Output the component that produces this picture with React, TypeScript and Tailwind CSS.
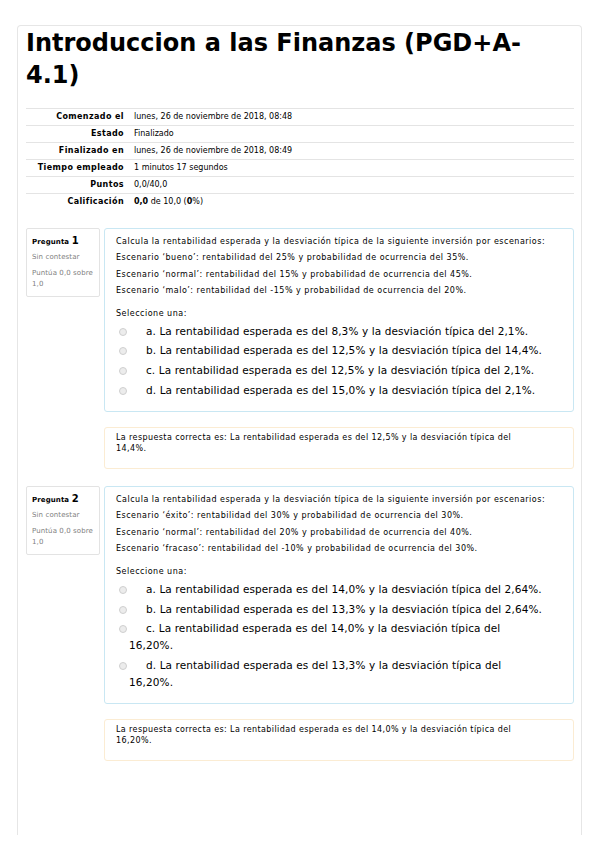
import React from "react";

type Pregunta = {
  num: number;
  enunciado: string[];
  opciones: string[];
  correcta: string;
};

const resumen: [string, React.ReactNode][] = [
  ["Comenzado el", "lunes, 26 de noviembre de 2018, 08:48"],
  ["Estado", "Finalizado"],
  ["Finalizado en", "lunes, 26 de noviembre de 2018, 08:49"],
  ["Tiempo empleado", "1 minutos 17 segundos"],
  ["Puntos", "0,0/40,0"],
  [
    "Calificación",
    <>
      <b>0,0</b> de 10,0 (<b>0</b>%)
    </>,
  ],
];

const preguntas: Pregunta[] = [
  {
    num: 1,
    enunciado: [
      "Calcula la rentabilidad esperada y la desviación típica de la siguiente inversión por escenarios:",
      "Escenario ‘bueno’: rentabilidad del 25% y probabilidad de ocurrencia del 35%.",
      "Escenario ‘normal’: rentabilidad del 15% y probabilidad de ocurrencia del 45%.",
      "Escenario ‘malo’: rentabilidad del -15% y probabilidad de ocurrencia del 20%.",
    ],
    opciones: [
      "a. La rentabilidad esperada es del 8,3% y la desviación típica del 2,1%.",
      "b. La rentabilidad esperada es del 12,5% y la desviación típica del 14,4%.",
      "c. La rentabilidad esperada es del 12,5% y la desviación típica del 2,1%.",
      "d. La rentabilidad esperada es del 15,0% y la desviación típica del 2,1%.",
    ],
    correcta:
      "La respuesta correcta es: La rentabilidad esperada es del 12,5% y la desviación típica del 14,4%.",
  },
  {
    num: 2,
    enunciado: [
      "Calcula la rentabilidad esperada y la desviación típica de la siguiente inversión por escenarios:",
      "Escenario ‘éxito’: rentabilidad del 30% y probabilidad de ocurrencia del 30%.",
      "Escenario ‘normal’: rentabilidad del 20% y probabilidad de ocurrencia del 40%.",
      "Escenario ‘fracaso’: rentabilidad del -10% y probabilidad de ocurrencia del 30%.",
    ],
    opciones: [
      "a. La rentabilidad esperada es del 14,0% y la desviación típica del 2,64%.",
      "b. La rentabilidad esperada es del 13,3% y la desviación típica del 2,64%.",
      "c. La rentabilidad esperada es del 14,0% y la desviación típica del 16,20%.",
      "d. La rentabilidad esperada es del 13,3% y la desviación típica del 16,20%.",
    ],
    correcta:
      "La respuesta correcta es: La rentabilidad esperada es del 14,0% y la desviación típica del 16,20%.",
  },
];

const Radio = () => (
  <span className="inline-block align-[-1px] w-[8px] h-[8px] rounded-full border border-[#cfcfcf] bg-[#ececec] -ml-[10px] mr-[19px]" />
);

const BloquePregunta = ({ p }: { p: Pregunta }) => (
  <div className="flex gap-[4px] mt-[17px]">
    <div className="w-[74px] shrink-0 self-start border border-[#e3e3e3] rounded-[2px] pl-[5px] pr-[1px] pt-[6px] pb-[6px] text-[7px] tracking-[0.1px] text-[#808080] leading-[11px]">
      <div className="text-black font-bold leading-[12px]">
        Pregunta <span className="text-[10px]">{p.num}</span>
      </div>
      <div className="mt-[4.5px]">Sin contestar</div>
      <div className="mt-[5px]">Puntúa 0,0 sobre 1,0</div>
    </div>
    <div className="flex-1">
      <div className="border border-[#c9e7f3] rounded-[3px] pl-[11px] pr-[12px] pt-[5px] pb-[11px]">
        <div className="text-[8px] tracking-[0.5px] leading-[16.5px]">
          {p.enunciado.map((l, i) => (
            <div key={i}>{l}</div>
          ))}
        </div>
        <div className="text-[8px] tracking-[0.5px] leading-[16px] mt-[6px]">Seleccione una:</div>
        <div className="text-[10.5px] tracking-[0.1px] leading-[17px] pr-[16px]">
          {p.opciones.map((o, i) => (
            <div key={i} className="pl-[13px] py-[1.3px]">
              <Radio />
              {o}
            </div>
          ))}
        </div>
      </div>
      <div className="mt-[15px] border border-[#fbecd3] rounded-[3px] pl-[11px] pr-[40px] pt-[4px] pb-[14px] text-[8px] tracking-[0.4px] leading-[11px]">
        {p.correcta}
      </div>
    </div>
  </div>
);

export default function App() {
  return (
    <div className="bg-white w-[599px] h-[848px] pt-[25px] px-[17px] font-['DejaVu_Sans',sans-serif] text-black">
      <div className="h-[810px] border border-b-0 border-[#e6e6e6] rounded-t-[4px] pl-[8px] pr-[7px]">
        <h1 className="font-bold text-[24px] leading-[32px] pt-[1px] pb-[17px]">
          Introduccion a las Finanzas (PGD+A-4.1)
        </h1>
        <table className="w-full text-[8px] border-collapse">
          <tbody>
            {resumen.map(([k, v], i) => (
              <tr key={i} className="border-t border-[#e4e4e4] h-[17px]">
                <th className="w-[108px] text-right font-bold tracking-[0.4px] pr-[10px] whitespace-nowrap">{k}</th>
                <td className="text-left">{v}</td>
              </tr>
            ))}
          </tbody>
        </table>
        {preguntas.map((p) => (
          <BloquePregunta key={p.num} p={p} />
        ))}
      </div>
    </div>
  );
}
